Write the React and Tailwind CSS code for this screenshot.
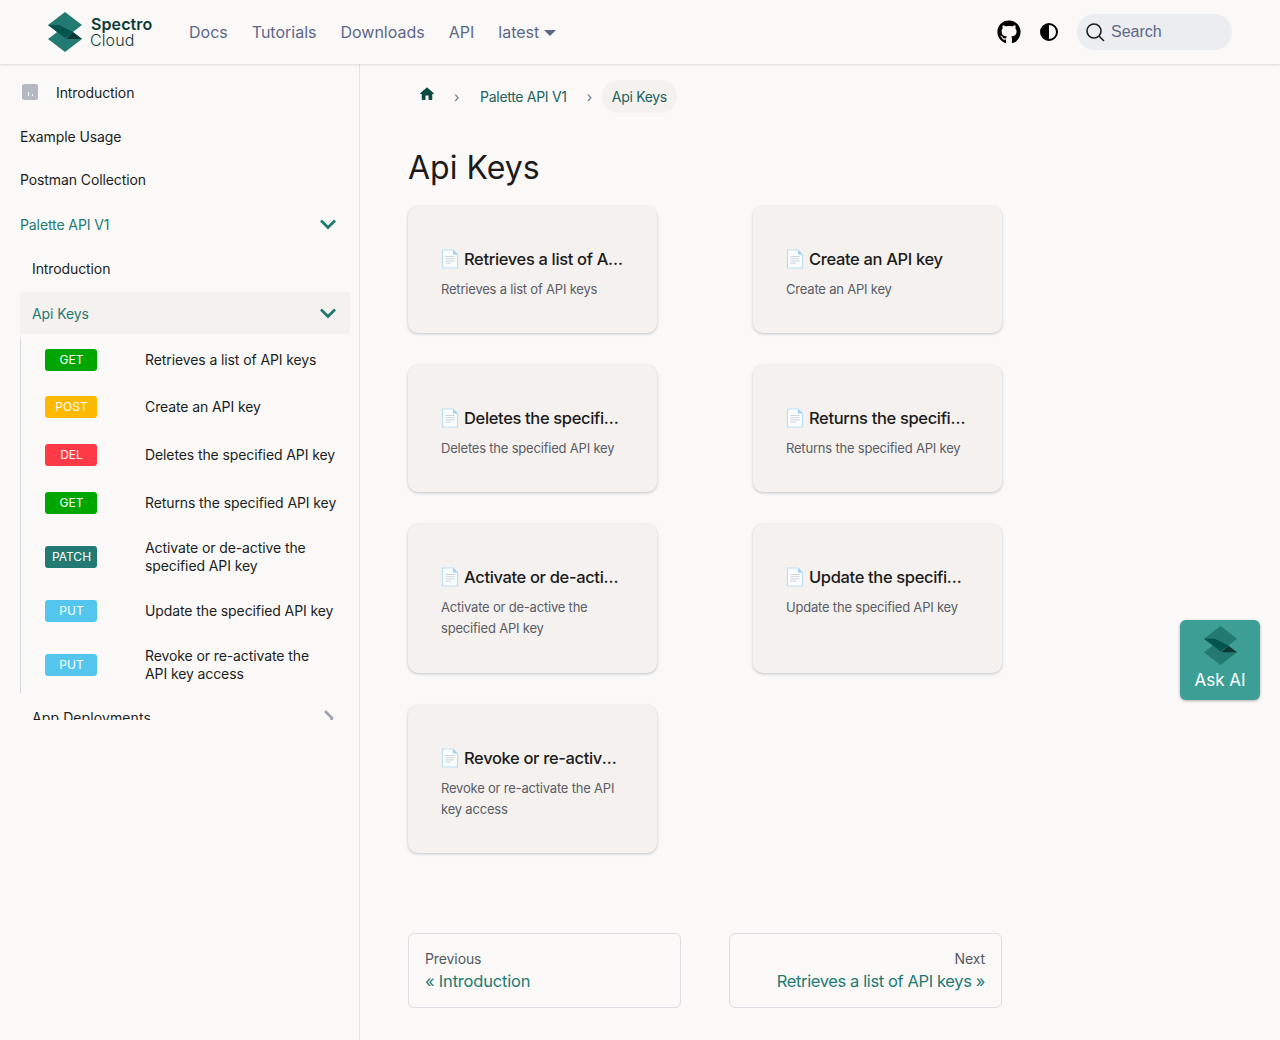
import React from 'react';
import { FaGithub } from 'react-icons/fa';

const font = { fontFamily: 'Inter, sans-serif' };

const Logo = ({ className }) => (
    <svg viewBox="0 0 34 40" className={className}>
        <path d="M17 14 L34 27 L17 40 L0 27 Z" fill="#237a72" />
        <path d="M17 0 L34 13 L17 26 L0 13 Z" fill="#237a72" />
        <path d="M0 13 L11 13 L25 20 L17 26 Z" fill="#03544e" />
        <path d="M25 20 L34 27 L18 27 Z" fill="#0c3b37" />
    </svg>
);

const DocIcon = () => (
    <svg viewBox="0 0 18 20" className="w-[18px] h-5 shrink-0">
        <path d="M1.5 1 H12 L16.5 5.5 V19 H1.5 Z" fill="#fbfcfd" stroke="#bcdff5" strokeWidth="1.2" />
        <path d="M12 1 L16.5 5.5 H12 Z" fill="#9fd0f0" />
        <path d="M4.5 7.5 H13.5 M4.5 9.7 H13.5 M4.5 11.9 H13.5 M4.5 14.1 H10" stroke="#cdd4da" strokeWidth="1" />
    </svg>
);

const methods = [
    { label: 'GET', color: 'bg-[#00a600]', text: 'Retrieves a list of API keys', h: 'h-[44px]' },
    { label: 'POST', color: 'bg-[#ffb900]', text: 'Create an API key', h: 'h-[50px]' },
    { label: 'DEL', color: 'bg-[#fe3a47]', text: 'Deletes the specified API key', h: 'h-[46px]' },
    { label: 'GET', color: 'bg-[#00a600]', text: 'Returns the specified API key', h: 'h-[50px]' },
    { label: 'PATCH', color: 'bg-[#237a72]', text: 'Activate or de-active the\nspecified API key', h: 'h-[58px]' },
    { label: 'PUT', color: 'bg-[#54c6ee]', text: 'Update the specified API key', h: 'h-[50px]' },
    { label: 'PUT', color: 'bg-[#54c6ee]', text: 'Revoke or re-activate the\nAPI key access', h: 'h-[57px]' },
];

const cards = [
    { title: 'Retrieves a list of API keys', desc: 'Retrieves a list of API keys', h: 'h-[127px]' },
    { title: 'Create an API key', desc: 'Create an API key', h: 'h-[127px]' },
    { title: 'Deletes the specified API key', desc: 'Deletes the specified API key', h: 'h-[127px]' },
    { title: 'Returns the specified API key', desc: 'Returns the specified API key', h: 'h-[127px]' },
    { title: 'Activate or de-active the specified API key', desc: 'Activate or de-active the specified API key', h: 'h-[149px]' },
    { title: 'Update the specified API key', desc: 'Update the specified API key', h: 'h-[149px]' },
    { title: 'Revoke or re-activate the API key access', desc: 'Revoke or re-activate the API key access', h: 'h-[148px]' },
];

const Chevron = () => (
    <svg viewBox="0 0 24 24" className="w-6 h-6 text-[#237a72]" fill="none" stroke="currentColor" strokeWidth="2.8">
        <path d="M5 8.5 L12 15.5 L19 8.5" />
    </svg>
);

const App = () => {
    return (
        <div className="w-[1280px] h-[1040px] overflow-hidden bg-[#faf9f8] text-[#1c1b1a] flex flex-col relative" style={font}>
            {/* Top navigation */}
            <header className="h-[64px] shrink-0 flex items-center pl-[48px] pr-[48px] shadow-[0_1px_2px_rgba(0,0,0,0.12)] z-10 bg-[#faf9f8]">
                <Logo className="w-[34px] h-[40px]" />
                <div className="ml-[8px] w-[66px] flex flex-col leading-[16px] text-[#0c3b37] text-[16px] tracking-[0.1px]">
                    <span className="font-semibold pl-px">Spectro</span>
                    <span className="font-light">Cloud</span>
                </div>
                <nav className="ml-[33px] flex items-center gap-[24px] text-[16px] text-[#5d6788]">
                    <span>Docs</span>
                    <span>Tutorials</span>
                    <span>Downloads</span>
                    <span>API</span>
                    <span className="flex items-center gap-[5px]">
                        latest
                        <span className="w-0 h-0 border-x-[6px] border-x-transparent border-t-[6px] border-t-[#5d6788] mt-[2px]" />
                    </span>
                </nav>
                <div className="ml-auto flex items-center">
                    <FaGithub className="w-6 h-6 text-black" />
                    <svg viewBox="0 0 20 20" className="w-[20px] h-[20px] ml-[18px]">
                        <circle cx="10" cy="10" r="8" fill="none" stroke="black" strokeWidth="2" />
                        <path d="M10 2 A8 8 0 0 0 10 18 Z" fill="black" />
                    </svg>
                    <div className="ml-[18px] w-[155px] h-[36px] rounded-full bg-[#ebedf1] flex items-center pl-[8px] gap-[6px] text-[#5d6788] text-[16px]" style={{ fontFamily: '"Liberation Sans", sans-serif' }}>
                        <svg viewBox="0 0 20 20" className="w-[20px] h-[20px]" fill="none" stroke="#1c1e21" strokeWidth="1.6">
                            <circle cx="9" cy="9" r="7" />
                            <path d="M14 14 L19 19" />
                        </svg>
                        Search
                    </div>
                </div>
            </header>

            <div className="flex flex-1 min-h-0">
                {/* Sidebar */}
                <aside className="w-[360px] shrink-0 border-r border-[#e3e4e8] text-[14px] text-[#1c1e21] tracking-[-0.1px]">
                    <div className="h-[56px] pl-[22px] flex items-center gap-[18px]">
                        <span className="w-4 h-4 rounded-[2px] bg-[#b5b8c4] flex items-end justify-center gap-[3px] pb-[4px]">
                            <span className="w-px h-[4px] bg-white" />
                            <span className="w-px h-[2px] bg-white" />
                        </span>
                        Introduction
                    </div>
                    <div className="h-[32px] pl-[20px] flex items-center">Example Usage</div>
                    <div className="h-[54px] pl-[20px] flex items-center">Postman Collection</div>
                    <div className="h-[36px] pl-[20px] pr-[19px] flex items-center justify-between text-[#237a72]">
                        Palette API V1
                        <Chevron />
                    </div>
                    <div className="ml-[20px] mr-[9px] mt-[4px]">
                        <div className="h-[44px] pl-[12px] flex items-center">Introduction</div>
                        <div className="mt-[2px] h-[42px] pl-[12px] pr-[10px] flex items-center justify-between rounded-[4px] bg-[#f4f1ef] text-[#237a72]">
                            Api Keys
                            <Chevron />
                        </div>
                        <div className="mt-[4px] border-l border-[#d3d8e3]">
                            {methods.map((m, i) => (
                                <div key={i} className={`${m.h} flex items-center pl-[24px]`}>
                                    <span className={`${m.color} w-[52px] h-[22px] rounded-[3px] flex items-center justify-center pl-px text-white text-[12px] tracking-normal shrink-0`}>{m.label}</span>
                                    <span className="ml-[48px] leading-[18px] whitespace-pre-line">{m.text}</span>
                                </div>
                            ))}
                        </div>
                        <div className="h-[27px] overflow-hidden pl-[12px] pr-[15px] flex items-start justify-between pt-[16px]">
                            <span className="leading-[18px] tracking-[0.1px]">App Deployments</span>
                            <svg viewBox="0 0 12 12" className="w-3 h-3 mt-[1px] shrink-0" fill="none" stroke="#9ea3b2" strokeWidth="2.6"><path d="M2 1 L9 8 L8 10" /></svg>
                        </div>
                    </div>
                </aside>

                {/* Main content */}
                <main className="flex-1 pl-[48px] pt-[16px]">
                    <div className="w-[594px]">
                        <div className="h-[33px] flex items-center text-[14px] text-[#22615c] tracking-[-0.3px]">
                            <svg viewBox="0 0 24 24" className="ml-[10px] w-[18px] h-[18px] -mt-[5px]" fill="#0c4a45"><path d="M10 19v-5h4v5c0 .55.45 1 1 1h3c.55 0 1-.45 1-1v-7h1.7c.46 0 .68-.57.33-.87L12.67 3.6c-.38-.34-.96-.34-1.34 0l-8.36 7.53c-.34.3-.13.87.33.87H5v7c0 .55.45 1 1 1h3c.55 0 1-.45 1-1z" /></svg>
                            <span className="ml-[18px] text-[#6a7080] text-[14px]">›</span>
                            <span className="ml-[21px]">Palette API V1</span>
                            <span className="ml-[20px] text-[#6a7080] text-[14px]">›</span>
                            <span className="ml-[10px] h-[33px] px-[10px] rounded-full bg-[#f4f1ef] flex items-center">Api Keys</span>
                        </div>
                        <h1 className="mt-[31px] text-[32px] leading-[48px] tracking-normal text-[#1c1b1a] font-normal">Api Keys</h1>
                        <div className="mt-[14px] grid grid-cols-[249px_249px] gap-x-[96px] gap-y-[32px]">
                            {cards.map((c, i) => (
                                <div key={i} className={`${c.h} rounded-[10px] bg-[#f4f1ef] shadow-[0_1px_3px_rgba(60,70,90,0.3)] px-[33px] pt-[35px]`}>
                                    <div className="flex items-center gap-[5px] h-[36px] text-[16.5px] text-[#1c1b1a] font-medium tracking-[-0.35px]">
                                        <DocIcon />
                                        <span className="truncate">{c.title}</span>
                                    </div>
                                    <p className="mt-[2px] text-[13px] leading-[21px] text-[#5a5d66] tracking-[-0.2px]">{c.desc}</p>
                                </div>
                            ))}
                        </div>
                        <div className="mt-[80px] grid grid-cols-2 gap-[48px]">
                            <div className="h-[75px] rounded-[6px] border border-[#dcdee3] px-[16px] pt-[15px]">
                                <div className="text-[14px] leading-[20px] text-[#525860] tracking-[-0.1px]">Previous</div>
                                <div className="text-[16.5px] leading-[24px] text-[#237a72] tracking-[-0.2px]">« Introduction</div>
                            </div>
                            <div className="h-[75px] rounded-[6px] border border-[#dcdee3] px-[16px] pt-[15px] text-right">
                                <div className="text-[14px] leading-[20px] text-[#525860] tracking-[-0.1px]">Next</div>
                                <div className="text-[16.5px] leading-[24px] text-[#237a72] tracking-[-0.38px]">Retrieves a list of API keys »</div>
                            </div>
                        </div>
                    </div>
                </main>
            </div>

            {/* Ask AI button */}
            <div className="absolute left-[1180px] top-[620px] w-[80px] h-[80px] rounded-[6px] bg-[#3d9e96] shadow-[0_1px_3px_rgba(0,0,0,0.3)] flex flex-col items-center pt-[6px] text-white text-[17px] leading-[24px]">
                <Logo className="w-[33px] h-[39px]" />
                <span className="mt-[3px]">Ask AI</span>
            </div>
        </div>
    );
};

export default App;
